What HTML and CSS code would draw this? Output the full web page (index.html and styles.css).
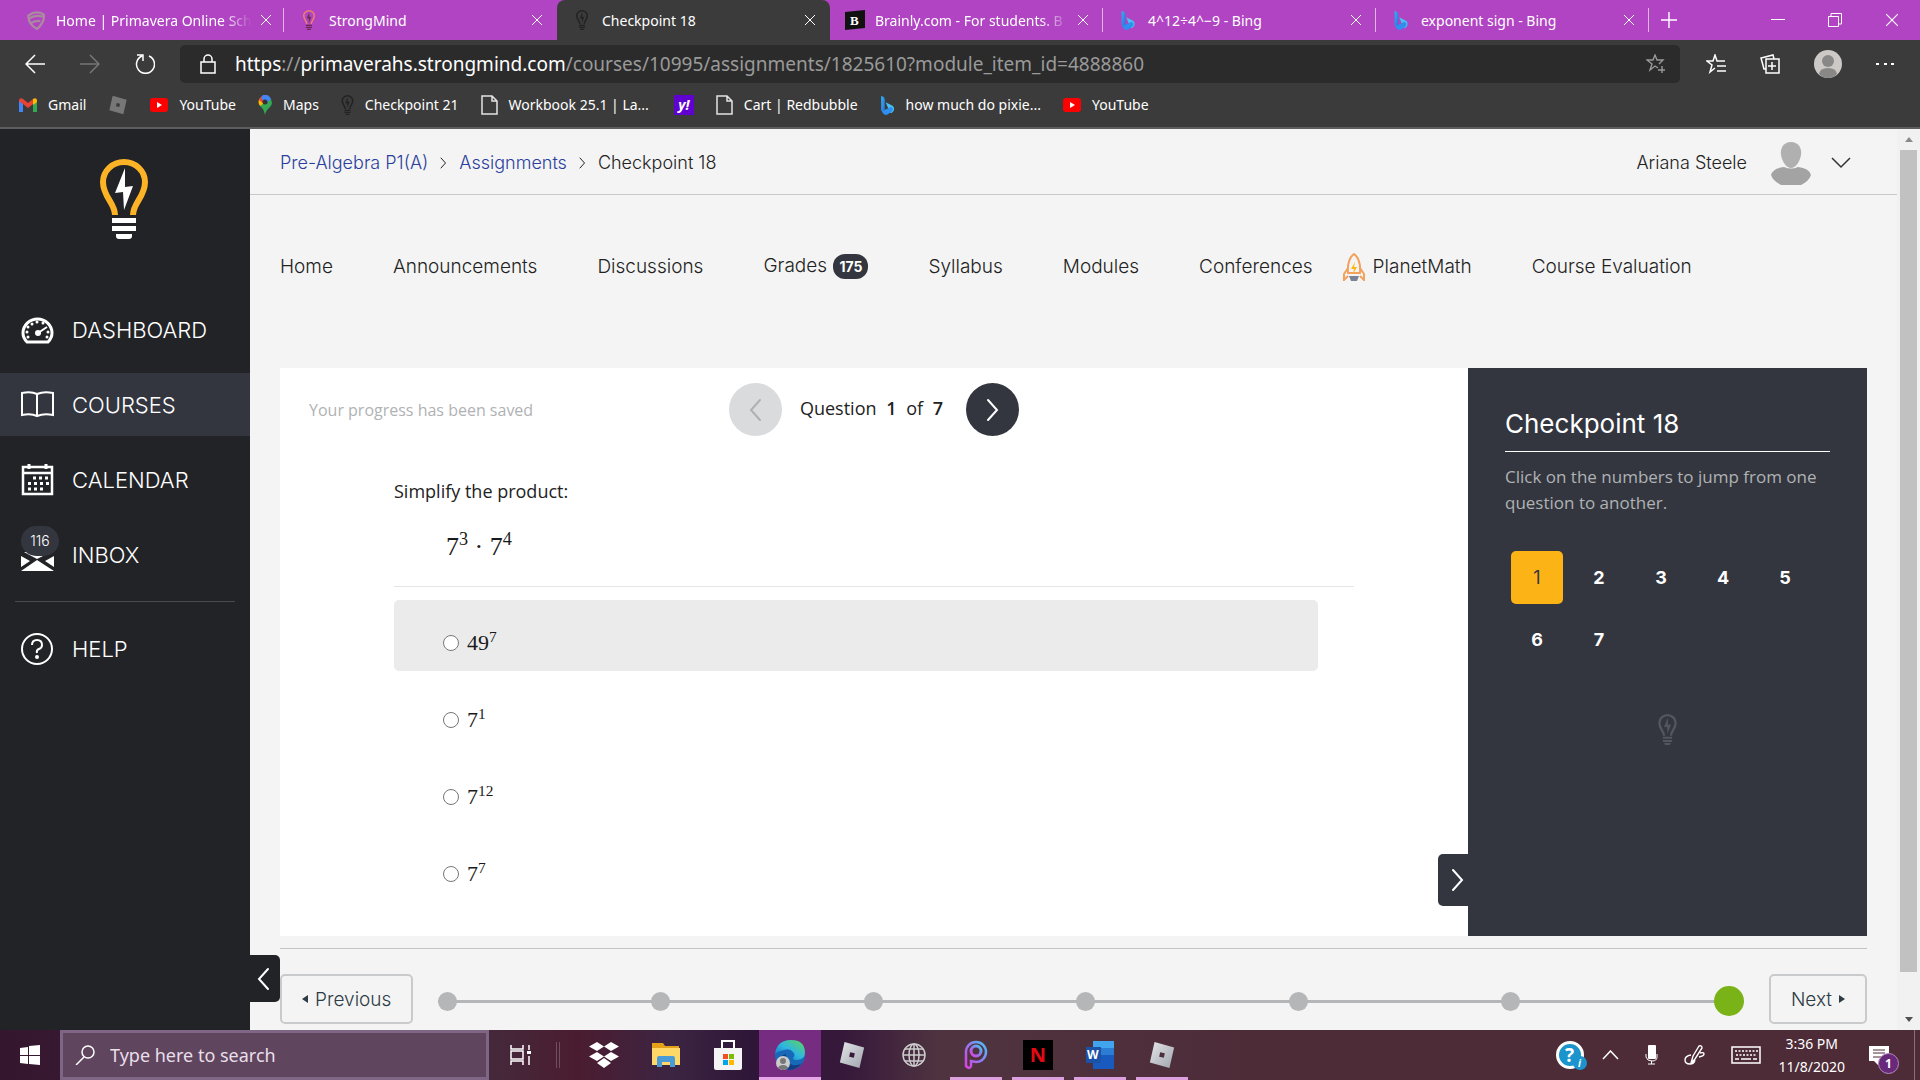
FILE: index.html
```html
<!DOCTYPE html>
<html lang="en">
<head>
    <meta charset="UTF-8">
    <meta name="viewport" content="width=device-width, initial-scale=1.0">
    <title>Checkpoint 18</title>
    <link rel="stylesheet" href="styles.css">
</head>
<body>
    <svg class="sprite" aria-hidden="true">
        <defs>
            <linearGradient id="bingBlue" x1="0" y1="0" x2="1" y2="1">
                <stop offset="0" stop-color="#2fb4f4"/><stop offset="1" stop-color="#2a6be0"/>
            </linearGradient>
            <linearGradient id="edgeWave" x1="0" y1="1" x2="1" y2="0">
                <stop offset="0" stop-color="#1467c0"/><stop offset=".5" stop-color="#2fb7e0"/><stop offset="1" stop-color="#5ed655"/>
            </linearGradient>
            <linearGradient id="picsart" x1="1" y1="0" x2="0" y2="1">
                <stop offset="0" stop-color="#45c6f5"/><stop offset=".5" stop-color="#9277ee"/><stop offset="1" stop-color="#e03fe0"/>
            </linearGradient>
            <linearGradient id="silver" x1="0" y1="0" x2="1" y2="1">
                <stop offset="0" stop-color="#e4e6ea"/><stop offset="1" stop-color="#9fa4ac"/>
            </linearGradient>
        </defs>
        <symbol id="bulb" viewBox="0 0 48 80">
            <path class="glass" fill="none" stroke-width="6" d="M15 56C15 44 3 38 3 23a21 20 0 0 1 42 0c0 15-12 21-12 33"/>
            <path class="bolt" d="M25 9 15 34l8-1 1 18 9-24-8 1z"/>
            <path class="bolt" d="M12 59h24v5H12zM12 67h24v5H12zM16 75h16v2q0 3-3 3H19q-3 0-3-3z"/>
        </symbol>
        <symbol id="close" viewBox="0 0 12 12"><path d="M1 1l10 10M11 1 1 11" fill="none" stroke="currentColor"/></symbol>
        <symbol id="bing" viewBox="0 0 16 22">
            <path fill="url(#bingBlue)" d="M1 1q4 1 4 4v11l-2 3q-2-1-2-3z"/>
            <path fill="#43c4f2" d="M6 8l8 4q2 2 1 5-1 2-3 3l-4-3 1-2-3-7z"/>
            <path fill="#2f8ff0" d="M2 18l10-5q4 3 0 6l-5 3q-4 0-5-4z"/>
        </symbol>
        <symbol id="youtube" viewBox="0 0 18 14"><rect width="18" height="14" rx="3" fill="#f00"/><path d="M7 4v6l5-3z" fill="#fff"/></symbol>
        <symbol id="page" viewBox="0 0 17 20"><path d="M1 1h10l5 5v13H1zM11 1v5h5" fill="none" stroke="#e4e4e4" stroke-width="1.5"/></symbol>
        <symbol id="roblox" viewBox="0 0 28 30"><path fill-rule="evenodd" d="M6 1l21 6-5 22L1 23zM12 12l-1 5 5 1 1-5z"/></symbol>
        <symbol id="left" viewBox="0 0 14 24"><path d="M12 2 3 12l9 10" fill="none" stroke="currentColor" stroke-width="2" stroke-linecap="round"/></symbol>
        <symbol id="right" viewBox="0 0 14 24"><path d="M2 2l9 10-9 10" fill="none" stroke="currentColor" stroke-width="2" stroke-linecap="round"/></symbol>
    </svg>

    <header class="browser">
        <div class="tabs">
            <div class="tab">
                <svg class="favicon" viewBox="0 0 18 18"><path d="M2 5q7-5 14-1 1 7-6 13-8-4-8-12zM2 8q6-4 13-2M4 12q5-3 9-2" fill="none" stroke="#ab8a9f" stroke-width="2"/></svg>
                <span class="tab-title faded">Home | Primavera Online Sch</span>
                <button aria-label="Close tab"><svg width="12" height="12"><use href="#close"/></svg></button>
            </div>
            <div class="tab">
                <svg class="favicon bulb-orange"><use href="#bulb"/></svg>
                <span class="tab-title">StrongMind</span>
                <button aria-label="Close tab"><svg width="12" height="12"><use href="#close"/></svg></button>
            </div>
            <div class="tab active">
                <svg class="favicon bulb-black"><use href="#bulb"/></svg>
                <span class="tab-title">Checkpoint 18</span>
                <button aria-label="Close tab"><svg width="12" height="12"><use href="#close"/></svg></button>
            </div>
            <div class="tab">
                <svg class="favicon" viewBox="0 0 20 20"><path d="M0 2 20 0v18L0 20z" fill="#111"/><text x="5" y="15" class="logo-b">B</text></svg>
                <span class="tab-title faded">Brainly.com - For students. B</span>
                <button aria-label="Close tab"><svg width="12" height="12"><use href="#close"/></svg></button>
            </div>
            <div class="tab">
                <svg class="favicon"><use href="#bing"/></svg>
                <span class="tab-title">4^12÷4^−9 - Bing</span>
                <button aria-label="Close tab"><svg width="12" height="12"><use href="#close"/></svg></button>
            </div>
            <div class="tab">
                <svg class="favicon"><use href="#bing"/></svg>
                <span class="tab-title">exponent sign - Bing</span>
                <button aria-label="Close tab"><svg width="12" height="12"><use href="#close"/></svg></button>
            </div>
            <button class="new-tab" aria-label="New tab"><svg width="16" height="16" viewBox="0 0 16 16"><path d="M8 0v16M0 8h16" stroke="#fff" stroke-width="1.4"/></svg></button>
            <div class="window-buttons">
                <button aria-label="Minimize"><svg width="14" height="14"><path d="M0 6.500h14" stroke="#fff"/></svg></button>
                <button aria-label="Restore"><svg width="14" height="14"><path d="M.5 3.500h10v10H.5zM3 3V.5h10.500V11H11" fill="none" stroke="#fff"/></svg></button>
                <button aria-label="Close"><svg width="14" height="14"><use href="#close"/></svg></button>
            </div>
        </div>

        <div class="toolbar">
            <button aria-label="Back"><svg width="20" height="20" viewBox="0 0 20 20"><path d="M20 10H1M10 1l-9 9 9 9" fill="none" stroke="#fff" stroke-width="1.5"/></svg></button>
            <button aria-label="Forward"><svg width="20" height="20" viewBox="0 0 20 20"><path d="M0 10h19M10 1l9 9-9 9" fill="none" stroke="#777" stroke-width="1.5"/></svg></button>
            <button aria-label="Refresh"><svg width="20" height="20" viewBox="0 0 20 20"><path d="M7 2A9 9 0 1 0 14 2M2 1h6v6" fill="none" stroke="#fff" stroke-width="1.5"/></svg></button>
            <div class="address">
                <svg width="16" height="20" viewBox="0 0 16 20"><path d="M1 8h14v11H1zM4 8V5a4 4 0 0 1 8 0v3" fill="none" stroke="#fff" stroke-width="1.5"/></svg>
                <span class="url"><b>https</b>://<b>primaverahs.strongmind.com</b>/courses/10995/assignments/1825610?module_item_id=4888860</span>
                <svg width="20" height="20" viewBox="0 0 20 20"><path d="M12 14l-3-2-5 4 2-6-5-4h6l2-5 2 5h6l-4 4M16 12v7M12 16h7" fill="none" stroke="#999" stroke-width="1.4"/></svg>
            </div>
            <div class="toolbar-end">
                <button aria-label="Favorites"><svg width="20" height="20" viewBox="0 0 20 20"><path d="M9 14l-5 4 2-7-5-4h6l2-6 2 6h8M11 12h9M11 17h9" fill="none" stroke="#fff" stroke-width="1.5"/></svg></button>
                <button aria-label="Collections"><svg width="20" height="20" viewBox="0 0 20 20"><path d="M6 5h13v14H6zM12 8v8M8 12h8M6 15H4L1 4l12-3 1 4" fill="none" stroke="#fff" stroke-width="1.5"/></svg></button>
                <button aria-label="Profile"><svg width="28" height="28" viewBox="0 0 28 28"><circle cx="14" cy="14" r="14" fill="#ccc9c6"/><circle cx="14" cy="11" r="6" fill="#8a8886"/><path d="M5 24q1-6 9-6t9 6q-4 4-9 4t-9-4z" fill="#8a8886"/></svg></button>
                <button aria-label="Settings and more"><svg width="18" height="4"><path d="M0 1h3v2H0zM8 1h3v2H8zM15 1h3v2h-3z" fill="#fff"/></svg></button>
            </div>
        </div>

        <nav class="bookmarks" aria-label="Bookmarks">
            <a href="#"><svg width="18" height="14" viewBox="0 0 18 14"><path d="M0 2v12h4V6z" fill="#4285f4"/><path d="M14 6v8h4V2z" fill="#34a853"/><path d="M0 2q1-3 4-1l5 4 5-4v5l-5 4-5-4-4-3z" fill="#ea4335"/><path d="M14 1q3-2 4 1v2l-4 3z" fill="#fbbc04"/></svg>Gmail</a>
            <a href="#" aria-label="Roblox"><svg class="roblox-grey" width="20" height="20"><use href="#roblox"/></svg></a>
            <a href="#"><svg width="18" height="14"><use href="#youtube"/></svg>YouTube</a>
            <a href="#"><svg width="14" height="20" viewBox="0 0 14 20"><path d="M7 20Q6 14 2 11L12 3q4 5 0 9-4 3-5 8z" fill="#34a853"/><path d="M2 11q-3-4 0-8l6 4z" fill="#fbbc04"/><path d="M1 5l4 3 6-7Q4-2 1 5z" fill="#ea4335"/><path d="M5 0q6-1 8 4l-5 5-5-6z" fill="#4285f4"/><circle cx="7" cy="7" r="2.500" fill="#333"/></svg>Maps</a>
            <a href="#"><svg class="bulb-black" width="13" height="20"><use href="#bulb"/></svg>Checkpoint 21</a>
            <a href="#"><svg width="17" height="20"><use href="#page"/></svg>Workbook 25.1 | La...</a>
            <a href="#" class="yahoo">y!</a>
            <a href="#"><svg width="17" height="20"><use href="#page"/></svg>Cart | Redbubble</a>
            <a href="#"><svg width="15" height="20"><use href="#bing"/></svg>how much do pixie...</a>
            <a href="#"><svg width="18" height="14"><use href="#youtube"/></svg>YouTube</a>
        </nav>
    </header>

    <div class="app">
        <aside class="sidebar">
            <a href="#" class="logo" aria-label="StrongMind"><svg width="48" height="80"><use href="#bulb"/></svg></a>
            <nav class="menu">
                <a href="#">
                    <svg width="33" height="32" viewBox="0 0 33 32"><path d="M6 28Q2 24 2 19a14.500 14 0 0 1 29 0q0 5-4 9z" fill="none" stroke="#fff" stroke-width="3"/><path d="M17 19l9-6" stroke="#fff" stroke-width="2"/><circle cx="17" cy="19" r="3" fill="#fff"/><path d="M7 23h0M6 18h0M7 13h0M11 10h0M16 8h0M22 9h0M27 18h0M26 23h0" stroke="#fff" stroke-width="3" stroke-linecap="round"/></svg>
                    DASHBOARD
                </a>
                <a href="#" class="current">
                    <svg width="33" height="32" viewBox="0 0 33 32"><path d="M1 4q9-2 15 1 7-3 16-1v22q-9-2-16 1-6-3-15-1zM16 5v22" fill="none" stroke="#fff" stroke-width="2"/></svg>
                    COURSES
                </a>
                <a href="#">
                    <svg width="33" height="32" viewBox="0 0 33 32"><path d="M2 3h29v27H2zM2 9h29" fill="none" stroke="#fff" stroke-width="2.500"/><path d="M8 0v5M25 0v5" stroke="#fff" stroke-width="3"/><path d="M12 14h16M7 19.500h21M7 25h15" stroke="#fff" stroke-width="3" stroke-dasharray="3 3"/></svg>
                    CALENDAR
                </a>
                <a href="#">
                    <span class="inbox-icon">
                        <svg width="33" height="32" viewBox="0 0 33 32"><path d="M0 17l9 5-9 6zM33 17l-9 5 9 6zM0 32l16-11 17 11zM3 13h27L16 20z" fill="#fff"/></svg>
                        <span class="count">116</span>
                    </span>
                    INBOX
                </a>
                <hr>
                <a href="#">
                    <svg width="33" height="32" viewBox="0 0 33 32"><circle cx="16" cy="16" r="15" fill="none" stroke="#fff" stroke-width="2"/><path d="M11 12q0-5 5-5t5 5q0 3-3 4t-2 4" fill="none" stroke="#fff" stroke-width="2"/><circle cx="16" cy="24" r="2" fill="#fff"/></svg>
                    HELP
                </a>
            </nav>
            <button class="sidebar-toggle" aria-label="Collapse menu"><svg width="14" height="24"><use href="#left"/></svg></button>
        </aside>

        <main class="content">
            <div class="topbar">
                <nav class="breadcrumbs" aria-label="Breadcrumbs">
                    <a href="#">Pre-Algebra P1(A)</a>
                    <svg width="7" height="12"><use href="#right"/></svg>
                    <a href="#">Assignments</a>
                    <svg width="7" height="12"><use href="#right"/></svg>
                    <span>Checkpoint 18</span>
                </nav>
                <button class="user">
                    Ariana Steele
                    <svg class="avatar" width="40" height="44" viewBox="0 0 40 44"><path d="M20 1c8 0 11 7 10 13s-5 13-10 13-9-7-10-13S12 1 20 1z" fill="#b0b0b0"/><path d="M0 34q2-7 13-8 7 3 14 0 11 1 13 8-2 6-10 10H10Q2 40 0 34z" fill="#a3a3a3"/></svg>
                    <svg width="20" height="12" viewBox="0 0 20 12"><path d="M1 1l9 9 9-9" fill="none" stroke="#333" stroke-width="1.500"/></svg>
                </button>
            </div>

            <nav class="course-nav">
                <a href="#">Home</a>
                <a href="#">Announcements</a>
                <a href="#">Discussions</a>
                <a href="#">Grades <span class="badge">175</span></a>
                <a href="#">Syllabus</a>
                <a href="#">Modules</a>
                <a href="#">Conferences</a>
                <a href="#" class="planet">
                    <svg width="22" height="28" viewBox="0 0 22 28"><path d="M5 20Q4 6 11 1q7 5 6 19zM5 15l-4 6v6l4-4M17 15l4 6v6l-4-4" fill="none" stroke="#f2a25c" stroke-width="2"/><path d="M12 9l-4 7h3l-1 5 4-7h-3z" fill="#fcb614"/><path d="M6 23h10l-2 5H8z" fill="#7b8494"/></svg>
                    PlanetMath
                </a>
                <a href="#">Course Evaluation</a>
            </nav>

            <div class="quiz">
                <section class="question-panel">
                    <div class="question-head">
                        <span class="saved">Your progress has been saved</span>
                        <div class="pager">
                            <button class="round" disabled aria-label="Previous question"><svg width="14" height="24"><use href="#left"/></svg></button>
                            <span class="position">Question <b>1</b> of <b>7</b></span>
                            <button class="round" aria-label="Next question"><svg width="14" height="24"><use href="#right"/></svg></button>
                        </div>
                    </div>
                    <div class="question">
                        <p>Simplify the product:</p>
                        <p class="formula">7<sup>3</sup> · 7<sup>4</sup></p>
                    </div>
                    <div class="choices">
                        <label class="choice hover"><input type="radio" name="answer"><span>49<sup>7</sup></span></label>
                        <label class="choice"><input type="radio" name="answer"><span>7<sup>1</sup></span></label>
                        <label class="choice"><input type="radio" name="answer"><span>7<sup>12</sup></span></label>
                        <label class="choice"><input type="radio" name="answer"><span>7<sup>7</sup></span></label>
                    </div>
                </section>
                <aside class="jump-panel">
                    <h1>Checkpoint 18</h1>
                    <p>Click on the numbers to jump from one question to another.</p>
                    <div class="numbers">
                        <button class="selected">1</button>
                        <button>2</button>
                        <button>3</button>
                        <button>4</button>
                        <button>5</button>
                        <button>6</button>
                        <button>7</button>
                    </div>
                    <svg class="bulb-dim" width="19" height="31"><use href="#bulb"/></svg>
                    <button class="panel-toggle" aria-label="Hide panel"><svg width="14" height="24"><use href="#right"/></svg></button>
                </aside>
            </div>

            <footer class="module-nav">
                <a href="#" class="step"><i class="arrow-left"></i>Previous</a>
                <div class="progress">
                    <i></i><i></i><i></i><i></i><i></i><i></i><i class="done"></i>
                </div>
                <a href="#" class="step">Next<i class="arrow-right"></i></a>
            </footer>
        </main>

        <div class="scrollbar">
            <i class="arrow-up"></i>
            <div class="thumb"></div>
            <i class="arrow-down"></i>
        </div>
    </div>

    <div class="taskbar">
        <button class="start" aria-label="Start"><svg width="20" height="20" viewBox="0 0 20 20"><path d="M0 3l8-1v8H0zM9 1l11-1v10H9zM0 11h8v8l-8-1zM9 11h11v9L9 19z" fill="#fff"/></svg></button>
        <div class="search">
            <svg width="20" height="20" viewBox="0 0 20 20"><circle cx="13" cy="7" r="6" fill="none" stroke="#fff" stroke-width="1.500"/><path d="M9 12l-8 8" stroke="#fff" stroke-width="1.500"/></svg>
            <input type="text" placeholder="Type here to search" aria-label="Search">
        </div>
        <button class="task-view" aria-label="Task view"><svg width="21" height="20" viewBox="0 0 21 20"><path d="M1 0v4h12V0M1 20v-4h12v4M1 6h12v8H1zM19 0v5M19 11v9" fill="none" stroke="#fff" stroke-width="1.500"/><path d="M17 6h4v3h-4z" fill="#fff"/></svg></button>
        <div class="divider"></div>
        <div class="apps">
            <button aria-label="Dropbox"><svg width="30" height="26" viewBox="0 0 30 26"><path d="M8 0l7 4.500L8 9 0 4.500zM22 0l8 4.500L22 9l-7-4.500zM8 10l7 4.500L8 19l-8-4.500zM22 10l8 4.500-8 4.500-7-4.500zM15 16l7 5-7 5-7-5z" fill="#fff"/></svg></button>
            <button aria-label="File Explorer"><svg width="28" height="24" viewBox="0 0 28 24"><path d="M0 0h11l2 3h14v19H0z" fill="#e3a21a"/><path d="M0 5h28v17H0z" fill="#ffd868"/><path d="M5 24V15q0-2 2-2h14q2 0 2 2v9h-5v-5h-8v5z" fill="#4a9bd6"/></svg></button>
            <button aria-label="Store"><svg width="30" height="30" viewBox="0 0 30 30"><path d="M9 9V1h12v8" fill="none" stroke="#fff" stroke-width="2"/><path d="M1 8h28v20q0 2-2 2H3q-2 0-2-2z" fill="#f4f4f4"/><path d="M10 14h5v5h-5z" fill="#f25022"/><path d="M16 14h5v5h-5z" fill="#7fba00"/><path d="M10 20h5v5h-5z" fill="#00a4ef"/><path d="M16 20h5v5h-5z" fill="#ffb900"/></svg></button>
            <button class="focused" aria-label="Edge"><svg width="30" height="30" viewBox="0 0 30 30"><circle cx="15" cy="15" r="15" fill="#1769b8"/><path d="M0 14Q2 0 16 0t14 13q0 6-8 7-4 0-4-2 3-3 0-6-3-4-9-2-6 1-9 4z" fill="url(#edgeWave)"/><path d="M11 14q-1 9 7 11 6 1 10-3-6 8-14 8Q5 27 5 19q1-4 6-5z" fill="#123f83"/><circle cx="8" cy="23" r="7" fill="#ccc"/><circle cx="8" cy="21" r="3" fill="#777"/><path d="M3 28q1-3 5-3t5 3q-5 4-10 0z" fill="#777"/></svg></button>
            <button aria-label="Roblox"><svg class="roblox-silver" width="28" height="28"><use href="#roblox"/></svg></button>
            <button aria-label="Browser"><svg width="24" height="24" viewBox="0 0 24 24"><g fill="none" stroke="#ccc" stroke-width="1.500"><circle cx="12" cy="12" r="11"/><ellipse cx="12" cy="12" rx="5" ry="11"/><path d="M12 1v22M1 12h22M3 6h18M3 18h18"/></g></svg></button>
            <button class="open" aria-label="PicsArt"><svg width="24" height="30" viewBox="0 0 24 30"><path d="M2 26V12a10 10 0 1 1 10 10l-5-1v5q-1 4-5 0z" fill="none" stroke="url(#picsart)" stroke-width="2.500"/><circle cx="12" cy="11" r="5" fill="none" stroke="url(#picsart)" stroke-width="3"/></svg></button>
            <button class="open" aria-label="Netflix"><span class="netflix">N</span></button>
            <button class="open" aria-label="Word"><svg width="30" height="28" viewBox="0 0 30 28"><path d="M8 0h21v28H8z" fill="#185abd"/><path d="M8 0h21v7H8z" fill="#41a5ee"/><path d="M8 7h21v7H8z" fill="#2b7cd3"/><path d="M1 6h15v16H1z" fill="#1b52a8"/><text x="2" y="18" class="logo-w">W</text></svg></button>
            <button class="open" aria-label="Roblox Player"><svg class="roblox-silver" width="28" height="28"><use href="#roblox"/></svg></button>
        </div>
        <div class="tray">
            <span class="tray-help">?<i>i</i></span>
            <svg width="17" height="10" viewBox="0 0 17 10"><path d="M1 9l7.500-8L16 9" fill="none" stroke="#fff" stroke-width="1.500"/></svg>
            <svg width="13" height="20" viewBox="0 0 13 20"><rect x="3" width="8" height="14" rx="1" fill="#fff"/><path d="M1 9v3q1 4 6 4t5-4V9M6.500 16v3M3 19h7" fill="none" stroke="#fff"/></svg>
            <svg width="21" height="20" viewBox="0 0 21 20"><path d="M7 18l2-7 6-10q3-1 3 2l-7 11zM7 10q-6 1-6 5t5 4q4 0 5-4M16 8q4-1 4 1t-5 3" fill="none" stroke="#fff" stroke-width="1.400"/></svg>
            <svg width="30" height="18" viewBox="0 0 30 18"><path d="M1 1h28v16H1z" fill="none" stroke="#fff" stroke-width="1.500"/><path d="M4 5h23M5 9h21" stroke="#fff" stroke-width="1.500" stroke-dasharray="2 1.500"/><path d="M4 13h4M10 13h10M22 13h4" stroke="#fff" stroke-width="1.500"/></svg>
            <div class="clock"><span>3:36 PM</span><span>11/8/2020</span></div>
            <div class="notifications">
                <svg width="21" height="21" viewBox="0 0 21 21"><path d="M0 1h20v15h-7l-4 4-4-4H0z" fill="#fff"/><path d="M4 5h12M4 8h12M4 12h8" stroke="#4d2c38"/></svg>
                <span>1</span>
            </div>
        </div>
        <button class="show-desktop" aria-label="Show desktop"></button>
    </div>
</body>
</html>
```

FILE: styles.css
```css
* {
    box-sizing: border-box;
}

body {
    margin: 0;
    height: 100vh;
    display: flex;
    flex-direction: column;
    overflow: hidden;
    font-family: "Open Sans", "Noto Sans", sans-serif;
    font-size: 18px;
    color: #222;
}

a {
    color: inherit;
    text-decoration: none;
}

button {
    padding: 0;
    border: none;
    background: none;
    color: inherit;
    font: inherit;
    display: flex;
    align-items: center;
    justify-content: center;
    cursor: pointer;
}

svg {
    flex: none;
}

.sprite {
    position: absolute;
    width: 0;
    height: 0;
}

/* browser */
.browser {
    flex: none;
    background-color: #3b3b3b;
    border-bottom: 2px solid #5d5c5f;
    color: #fff;
    font-family: "Noto Sans", "Open Sans", sans-serif;
    font-size: 14px;
}

.tabs {
    display: flex;
    height: 40px;
    padding-left: 11px;
    background-color: #b044c2;
}

.tab {
    flex: 0 1 273px;
    min-width: 0;
    display: flex;
    align-items: center;
    padding: 0 14px 0 15px;
    position: relative;
}

.tab::after {
    content: "";
    position: absolute;
    right: 0;
    top: 8px;
    height: 24px;
    border-right: 1px solid #e0b6e6;
}

.tab.active {
    background-color: #3b3b3b;
    border-radius: 8px 8px 0 0;
}

.tab.active::after,
.tab:nth-child(2)::after {
    display: none;
}

.favicon {
    width: 20px;
    height: 20px;
    margin-right: 10px;
}

.tab-title {
    flex: 1;
    white-space: nowrap;
    margin-right: 8px;
}

.faded {
    mask-image: linear-gradient(to right, #000 85%, transparent);
}

.new-tab {
    width: 40px;
}

.window-buttons {
    margin-left: auto;
    display: flex;
}

.window-buttons button {
    width: 57px;
}

.logo-b {
    fill: #fff;
    font: bold 13px "Liberation Serif", serif;
}

.bulb-orange {
    stroke: #f0806a;
    fill: #6b2a4c;
}

.bulb-black {
    stroke: #222;
    fill: #222;
}

.toolbar {
    display: flex;
    align-items: center;
    height: 47px;
    padding-right: 26px;
}

.toolbar > button {
    width: 55px;
}

.toolbar > button:first-child {
    margin-left: 7px;
}

.address {
    flex: 1;
    display: flex;
    align-items: center;
    gap: 19px;
    height: 38px;
    margin-left: 8px;
    padding: 0 14px 0 20px;
    border-radius: 5px;
    background-color: #2b2b2b;
}

.url {
    flex: 1;
    font-size: 19px;
    color: #9a9a9a;
}

.url b {
    font-weight: normal;
    color: #fff;
}

.toolbar-end {
    display: flex;
    align-items: center;
    gap: 34px;
    margin-left: 26px;
}

.bookmarks {
    display: flex;
    align-items: center;
    gap: 22px;
    height: 40px;
    padding: 0 19px 5px;
}

.bookmarks a {
    display: flex;
    align-items: center;
    gap: 11px;
}

.bookmarks .yahoo {
    justify-content: center;
    width: 20px;
    height: 20px;
    margin-left: 3px;
    background-color: #5f01d1;
    font-weight: bold;
    font-style: italic;
}

.roblox-grey {
    fill: #777;
}

/* page */
.app {
    flex: 1;
    min-height: 0;
    display: flex;
    background-color: #f4f4f4;
    font-family: Inter, "Open Sans", sans-serif;
}

.sidebar {
    flex: none;
    width: 250px;
    position: relative;
    background-color: #222327;
    color: #fff;
}

.logo {
    display: block;
    padding: 30px 0 59px 100px;
    stroke: #fcb426;
    fill: #fff;
}

.bolt {
    stroke: none;
}

.logo svg {
    display: block;
}

.menu a {
    display: flex;
    align-items: center;
    gap: 18px;
    height: 63px;
    margin-bottom: 12px;
    padding-left: 21px;
    font-size: 22px;
    font-weight: 300;
}

.menu .current {
    background-color: #33363f;
}

.menu hr {
    height: 1px;
    margin: 15px;
    border: none;
    background-color: #4a4b50;
}

.inbox-icon {
    position: relative;
    display: flex;
}

.count {
    position: absolute;
    left: 0;
    top: -13px;
    min-width: 38px;
    height: 30px;
    line-height: 30px;
    text-align: center;
    border-radius: 15px;
    background-color: #33363f;
    font-size: 14px;
}

.sidebar-toggle {
    position: absolute;
    z-index: 1;
    right: -30px;
    bottom: 28px;
    width: 30px;
    height: 47px;
    padding-right: 4px;
    border-radius: 0 5px 5px 0;
    background-color: #222327;
}

.content {
    flex: 1;
    min-width: 0;
}

.topbar {
    display: flex;
    justify-content: space-between;
    align-items: center;
    height: 66px;
    padding: 2px 46px 0 30px;
    border-bottom: 1px solid #c8c8c8;
    font-size: 18px;
    font-weight: 300;
}

.breadcrumbs {
    display: flex;
    align-items: center;
    gap: 12px;
}

.breadcrumbs a {
    color: #2b3f9e;
}

.user {
    gap: 24px;
}

.user .avatar {
    margin-right: -4px;
}

.course-nav {
    display: flex;
    align-items: center;
    gap: 60px;
    height: 143px;
    margin-bottom: 30px;
    padding: 0 30px;
    font-size: 19px;
    font-weight: 300;
    white-space: nowrap;
}

.badge {
    display: inline-block;
    margin-left: 1px;
    padding: 0 6px;
    border-radius: 12px;
    background-color: #33363f;
    color: #fff;
    font-size: 14px;
    font-weight: bold;
    line-height: 25px;
}

.planet {
    display: flex;
    align-items: center;
    gap: 8px;
    margin-left: -30px;
}

.quiz {
    display: flex;
    min-height: 568px;
    margin: 0 30px 12px;
    background-color: #fff;
    font-family: "Open Sans", "Noto Sans", sans-serif;
}

.question-panel {
    flex: 1;
}

.question-head {
    display: grid;
    grid-template-columns: 1fr auto 1fr;
    align-items: center;
    padding: 15px 29px 0;
}

.saved {
    font-size: 16px;
    color: #b0b2b4;
}

.pager {
    display: flex;
    align-items: center;
    gap: 18px;
}

.position {
    padding-bottom: 4px;
}

.position b {
    margin: 0 5px;
    font-weight: 600;
}

.round {
    width: 53px;
    height: 53px;
    border-radius: 50%;
    background-color: #33363f;
    color: #fff;
}

.round:disabled {
    background-color: #dadbdc;
    color: #b0b0b0;
}

.question {
    margin: 0 114px;
    padding-top: 42px;
    border-bottom: 1px solid #e4e4e4;
}

.question p {
    margin: 0;
    line-height: 26px;
}

.question .formula {
    margin: 30px 0 26px;
    padding-left: 52px;
    font-size: 26px;
}

.formula,
.choice {
    font-family: "Liberation Serif", serif;
    color: #1a1a1a;
}

sup {
    font-size: 70%;
    line-height: 0;
}

.choices {
    display: flex;
    flex-direction: column;
    gap: 6px;
    margin: 13px 150px 0 114px;
}

.choice {
    display: flex;
    align-items: center;
    gap: 8px;
    height: 71px;
    padding: 15px 0 0 49px;
    border-radius: 5px;
    font-size: 22px;
}

.choice.hover {
    background-color: #ebebeb;
}

.choice input {
    width: 16px;
    height: 16px;
    margin: 0;
}

.jump-panel {
    position: relative;
    flex: none;
    width: 399px;
    padding: 37px;
    background-color: #33363f;
    color: #fff;
    font-family: Inter, "Open Sans", sans-serif;
}

.jump-panel h1 {
    margin: 0 0 12px;
    padding-bottom: 9px;
    border-bottom: 1px solid #fff;
    font-size: 26px;
    font-weight: normal;
    line-height: 37px;
}

.jump-panel p {
    margin: 0 -10px 35px 0;
    color: #b0b2b4;
    font-family: "Open Sans", "Noto Sans", sans-serif;
    font-size: 17px;
    line-height: 26px;
}

.numbers {
    display: flex;
    flex-wrap: wrap;
    gap: 9px 10px;
    margin: 0 0 48px 6px;
    font-size: 18px;
    font-weight: bold;
}

.numbers button {
    width: 52px;
    height: 53px;
    border-radius: 5px;
}

.numbers .selected {
    background-color: #fcb316;
    color: #33363f;
    font-weight: normal;
}

.bulb-dim {
    display: block;
    margin: 0 auto;
    stroke: #54565e;
    fill: #54565e;
}

.panel-toggle {
    position: absolute;
    left: -30px;
    bottom: 30px;
    width: 40px;
    height: 52px;
    border-radius: 5px 0 0 5px;
    background-color: #33363f;
}

.module-nav {
    display: flex;
    align-items: center;
    gap: 25px;
    margin: 0 30px;
    padding-top: 25px;
    border-top: 1px solid #c4c4c4;
}

.step {
    display: flex;
    align-items: center;
    justify-content: center;
    gap: 7px;
    height: 50px;
    padding: 0 20px;
    border: 2px solid #c9cacc;
    border-radius: 5px;
    color: #2d3b45;
    font-size: 19px;
    font-weight: 300;
}

.step i,
.scrollbar i {
    border: 4px solid transparent;
}

.step .arrow-left {
    border-right: 6px solid #2d3b45;
    border-left: none;
}

.step .arrow-right {
    border-left: 6px solid #2d3b45;
    border-right: none;
}

.progress {
    flex: 1;
    display: flex;
    align-items: center;
    justify-content: space-between;
    margin-top: 4px;
    background: linear-gradient(#b4b6b8, #b4b6b8) center / 100% 3px no-repeat;
}

.progress i {
    width: 19px;
    height: 19px;
    border-radius: 50%;
    background-color: #b4b6b8;
}

.progress .done {
    width: 30px;
    height: 30px;
    background-color: #7ab317;
}

.scrollbar {
    flex: none;
    display: flex;
    flex-direction: column;
    align-items: center;
    justify-content: space-between;
    width: 23px;
    padding: 8px 0;
    background-color: #f1f1f1;
}

.scrollbar .arrow-up {
    border-bottom: 5px solid #8a8a8a;
    border-top: none;
}

.scrollbar .arrow-down {
    border-top: 5px solid #505050;
    border-bottom: none;
}

.thumb {
    flex: 1;
    width: 17px;
    margin: 8px 0 45px;
    background-color: #c1c1c1;
}

/* taskbar */
.taskbar {
    flex: none;
    display: flex;
    height: 50px;
    background: linear-gradient(to right, #35162f, #45283a 26%, #4b1c30 30%, #3c2542 35%, #2e1638 39%, #36183a 44%, #4f3440 49%, #4d2c38 65%, #4d2c38);
    color: #fff;
    font-family: "Noto Sans", "Open Sans", sans-serif;
}

.start {
    width: 60px;
}

.search {
    display: flex;
    align-items: center;
    gap: 15px;
    width: 429px;
    padding-left: 12px;
    border: 3px solid #7f6685;
    background-color: #60455f;
}

.search input {
    flex: 1;
    padding: 0;
    border: none;
    outline: none;
    background: none;
    color: #fff;
    font: inherit;
}

.search input::placeholder {
    color: #e9dfe9;
}

.task-view {
    width: 62px;
}

.divider {
    width: 4px;
    height: 26px;
    margin: 12px 13px 12px 5px;
    border: 1px solid #70505f;
    border-width: 0 1px;
}

.apps {
    display: flex;
}

.apps button {
    width: 62px;
    height: 50px;
    position: relative;
}

.apps .focused {
    background-color: #762c80;
    border-bottom: 3px solid #e6a6e8;
    padding-top: 3px;
}

.apps .open::after {
    content: "";
    position: absolute;
    left: 5px;
    right: 5px;
    bottom: 0;
    height: 3px;
    background-color: #dba0dd;
}

.roblox-silver {
    fill: url(#silver);
}

.netflix {
    width: 30px;
    height: 30px;
    background-color: #000;
    color: #e50914;
    font-size: 20px;
    font-weight: bold;
    line-height: 30px;
}

.logo-w {
    fill: #fff;
    font: bold 12px "Open Sans", sans-serif;
}

.tray {
    display: flex;
    align-items: center;
    gap: 26px;
    margin-left: auto;
    padding-right: 24px;
}

.tray-help {
    position: relative;
    width: 28px;
    height: 28px;
    margin-right: -8px;
    border: 3px solid #fff;
    border-radius: 50%;
    background-color: #1b93cc;
    font-size: 19px;
    font-weight: bold;
    line-height: 22px;
    text-align: center;
}

.tray-help i {
    position: absolute;
    right: -6px;
    bottom: -4px;
    width: 14px;
    height: 14px;
    border-radius: 50%;
    background-color: #1b93cc;
    font-size: 10px;
    line-height: 14px;
}

.clock {
    display: flex;
    flex-direction: column;
    align-items: center;
    margin: 0 -2px 0 -8px;
    font-size: 14px;
    line-height: 23px;
}

.notifications {
    display: flex;
    position: relative;
}

.notifications span {
    position: absolute;
    left: 9px;
    top: 8px;
    width: 21px;
    height: 21px;
    border: 1px solid #b48abf;
    border-radius: 50%;
    background-color: #68297a;
    font-size: 12px;
    font-weight: bold;
    line-height: 19px;
    text-align: center;
}

.show-desktop {
    width: 6px;
    border-left: 1px solid #8a7079;
}
```
